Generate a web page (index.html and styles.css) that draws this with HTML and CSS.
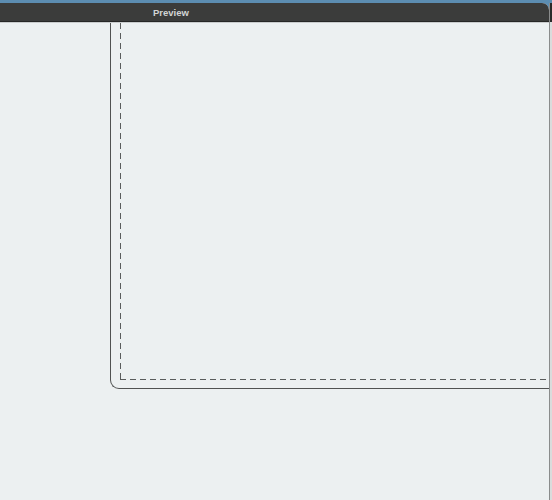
FILE: index.html
```html
<!DOCTYPE html>
<html>
<head>
<meta charset="utf-8">
<link rel="stylesheet" href="styles.css">
</head>
<body>
<div class="screen">
  <div class="topstrip"></div>
  <div class="row">
    <div class="window">
      <div class="titlebar"><span class="title">Preview</span></div>
      <div class="content">
        <div class="frame">
          <div class="dashed"></div>
        </div>
      </div>
    </div>
    <div class="side"></div>
  </div>
</div>
</body>
</html>
```
FILE: styles.css
```css
html, body {
  margin: 0;
  padding: 0;
  height: 100%;
  overflow: hidden;
}
body {
  background: #ecf0f1;
  font-family: "Liberation Sans", "DejaVu Sans", sans-serif;
}
.screen {
  display: flex;
  flex-direction: column;
  height: 500px;
  width: 552px;
}
.topstrip {
  height: 3px;
  background: #5c8db1;
  flex: none;
}
.row {
  flex: 1;
  display: flex;
  background: #5c8db1;
}
.window {
  width: 549px;
  display: flex;
  flex-direction: column;
  background: #ecf0f1;
  border-top-right-radius: 7px;
  overflow: hidden;
}
.titlebar {
  height: 18px;
  background: #3b3c3b;
  border-bottom: 1px solid #262726;
  display: flex;
  align-items: center;
  padding-left: 153px;
  flex: none;
}
.title {
  color: #d2d4d4;
  font-size: 9.5px;
  font-weight: bold;
}
.content {
  flex: 1;
  padding-left: 110px;
  border-top: 1px solid #c9cccd;
}
.frame {
  height: 366px;
  border-left: 1px solid #505252;
  border-bottom: 1px solid #505252;
  border-bottom-left-radius: 9px;
  padding: 0 0 8px 9px;
  box-sizing: border-box;
  display: flex;
}
.dashed {
  flex: 1;
  background:
    repeating-linear-gradient(to bottom, #5a5c5c 0 6px, transparent 6px 10px) left top / 1px 100% no-repeat,
    repeating-linear-gradient(to right, #5a5c5c 0 6px, transparent 6px 10px) left bottom / 100% 1px no-repeat;
}
.side {
  width: 3px;
  background: linear-gradient(to bottom, #2a2b2a 0 19px, #d9dcdc 19px);
  border-left: 1px solid #8a8c8c;
  box-sizing: border-box;
}
```
